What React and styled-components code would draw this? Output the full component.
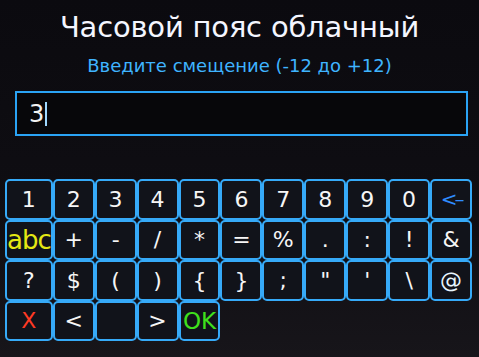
import React from 'react';
import styled, { createGlobalStyle } from 'styled-components';

const Global = createGlobalStyle`
  html, body {
    margin: 0;
    padding: 0;
    background: #0c0b10;
  }
`;

const Screen = styled.div`
  width: 479px;
  height: 357px;
  overflow: hidden;
  display: flex;
  flex-direction: column;
  background: linear-gradient(180deg, #0b0a0f 0%, #0f0e13 60%, #17151a 100%);
  font-family: "DejaVu Sans", "Liberation Sans", sans-serif;
`;

const Title = styled.h1`
  margin: 11px 0 0;
  font-size: 29px;
  font-weight: normal;
  line-height: 32px;
  color: #f4f6ff;
  text-align: center;
  letter-spacing: -0.2px;
`;

const Subtitle = styled.div`
  margin-top: 13px;
  font-size: 18px;
  line-height: 20px;
  color: #3fb4ff;
  text-align: center;
`;

const Input = styled.div`
  margin: 15px 11px 0 15px;
  height: 41px;
  border: 2px solid #2aa3f5;
  background: #07070a;
  display: flex;
  align-items: center;
  padding-left: 12px;
  color: #f2f2f2;
  font-size: 24px;
`;

const Caret = styled.span`
  display: inline-block;
  width: 2px;
  height: 24px;
  margin-left: 1px;
  background: #9fd8ff;
`;

const Keyboard = styled.div`
  margin: 43px 0 0 5px;
  width: 467px;
  display: grid;
  grid-template-columns: repeat(11, 1fr);
  grid-auto-rows: 40.5px;
`;

const Key = styled.div`
  border: 2px solid #36aaf8;
  border-radius: 5px;
  background: #11131a;
  display: flex;
  align-items: center;
  justify-content: center;
  color: ${(p) => p.$color || '#f6f6f6'};
  font-size: ${(p) => p.$size || 22}px;
  letter-spacing: ${(p) => p.$spacing || 0}px;
  overflow: visible;
  white-space: nowrap;
`;

const rows = [
  ['1', '2', '3', '4', '5', '6', '7', '8', '9', '0', '<–'],
  ['abc', '+', '-', '/', '*', '=', '%', '.', ':', '!', '&'],
  ['?', '$', '(', ')', '{', '}', ';', '"', "'", '\\', '@'],
  ['X', '<', '', '>', 'OK'],
];

const special = {
  '<–': { $color: '#2f8cff', $size: 20, $spacing: -3 },
  abc: { $color: '#e4e814', $size: 26, $spacing: -1 },
  X: { $color: '#ff3a24', $size: 22 },
  OK: { $color: '#3fe01c', $size: 23 },
  '@': { $color: '#e8f6ff', $size: 22 },
};

export default function App() {
  return (
    <Screen>
      <Global />
      <Title>Часовой пояс облачный</Title>
      <Subtitle>Введите смещение (-12 до +12)</Subtitle>
      <Input>
        3<Caret />
      </Input>
      <Keyboard>
        {rows.flat().map((k, i) => (
          <Key key={i} {...(special[k] || {})}>
            {k}
          </Key>
        ))}
      </Keyboard>
    </Screen>
  );
}
